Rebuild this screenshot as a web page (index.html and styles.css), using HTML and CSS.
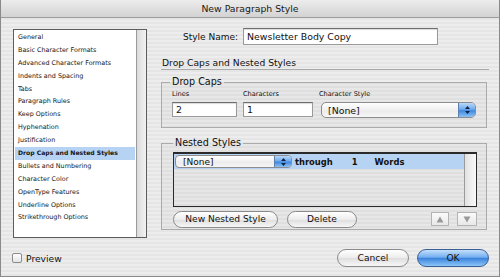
FILE: index.html
```html
<!DOCTYPE html>
<html lang="en">
<head>
    <meta charset="UTF-8">
    <title>New Paragraph Style</title>
    <link rel="stylesheet" href="styles.css">
</head>
<body>
    <div class="window">
        <!-- Title bar -->
        <div class="titlebar">New Paragraph Style</div>

        <div class="main">
            <!-- Category list -->
            <div class="cat-list">
                <ul class="cats">
                    <li>General</li>
                    <li>Basic Character Formats</li>
                    <li>Advanced Character Formats</li>
                    <li>Indents and Spacing</li>
                    <li>Tabs</li>
                    <li>Paragraph Rules</li>
                    <li>Keep Options</li>
                    <li>Hyphenation</li>
                    <li>Justification</li>
                    <li class="selected">Drop Caps and Nested Styles</li>
                    <li>Bullets and Numbering</li>
                    <li>Character Color</li>
                    <li>OpenType Features</li>
                    <li>Underline Options</li>
                    <li>Strikethrough Options</li>
                </ul>
                <div class="scroll-track"></div>
            </div>

            <!-- Settings panel -->
            <div class="settings">
                <div class="name-row">
                    <span class="name-label">Style Name:</span>
                    <div class="text-field name-field">Newsletter Body Copy</div>
                </div>

                <h2 class="section-head">Drop Caps and Nested Styles</h2>

                <fieldset class="group drop-caps">
                    <legend>Drop Caps</legend>
                    <div class="dc-fields">
                        <div class="field">
                            <span class="field-label">Lines</span>
                            <div class="text-field lines-field">2</div>
                        </div>
                        <div class="field">
                            <span class="field-label">Characters</span>
                            <div class="text-field chars-field">1</div>
                        </div>
                        <div class="field">
                            <span class="field-label">Character Style</span>
                            <div class="popup style-popup">
                                <span class="popup-text">[None]</span>
                                <span class="popup-arrows">
                                    <svg width="7" height="10" viewBox="0 0 7 10"><path d="M3.5 1 L6 4 L1 4 Z M3.5 9 L6 6 L1 6 Z" fill="#10254a"/></svg>
                                </span>
                            </div>
                        </div>
                    </div>
                </fieldset>

                <fieldset class="group nested">
                    <legend>Nested Styles</legend>
                    <div class="nested-list">
                        <div class="nested-rows">
                            <div class="nested-row">
                                <div class="popup row-popup">
                                    <span class="popup-text">[None]</span>
                                    <span class="popup-arrows">
                                        <svg width="7" height="10" viewBox="0 0 7 10"><path d="M3.5 1 L6 4 L1 4 Z M3.5 9 L6 6 L1 6 Z" fill="#10254a"/></svg>
                                    </span>
                                </div>
                                <span class="row-word">through</span>
                                <span class="row-num">1</span>
                                <span class="row-unit">Words</span>
                            </div>
                        </div>
                        <div class="scroll-track"></div>
                    </div>
                    <div class="nested-actions">
                        <button class="btn new-btn">New Nested Style</button>
                        <button class="btn delete-btn">Delete</button>
                        <span class="spacer"></span>
                        <button class="arrow-btn up">
                            <svg width="8" height="7" viewBox="0 0 8 7"><path d="M4 0.5 L7.5 6.5 L0.5 6.5 Z" fill="#9a9a9a"/></svg>
                        </button>
                        <button class="arrow-btn down">
                            <svg width="8" height="7" viewBox="0 0 8 7"><path d="M4 6.5 L7.5 0.5 L0.5 0.5 Z" fill="#9a9a9a"/></svg>
                        </button>
                    </div>
                </fieldset>
            </div>
        </div>

        <!-- Footer -->
        <div class="footer">
            <div class="preview"><span class="checkbox"></span>Preview</div>
            <span class="spacer"></span>
            <button class="btn cancel-btn">Cancel</button>
            <button class="btn ok-btn">OK</button>
        </div>
    </div>
</body>
</html>
```

FILE: styles.css
```css
/* Page */
body {
    margin: 0;
    padding: 0;
    background: #6b6b6b;
    font-family: "DejaVu Sans", sans-serif;
    color: #111;
}

.window {
    width: 500px;
    height: 277px;
    box-sizing: border-box;
    border: 1px solid #8a8a8a;
    border-top: none;
    background: repeating-linear-gradient(to bottom, #ededed 0, #ededed 2px, #e5e5e5 2px, #e5e5e5 4px);
    overflow: hidden;
}

/* Title bar */
.titlebar {
    height: 17px;
    line-height: 17px;
    text-align: center;
    font-size: 9.3px;
    color: #1a1a1a;
    background: linear-gradient(to bottom, #ececec, #d3d3d3);
    border-bottom: 1px solid #9c9c9c;
}

.main {
    display: grid;
    grid-template-columns: 134px 326px;
    column-gap: 14px;
    padding: 11px 0 0 12px;
}

/* Category list */
.cat-list {
    display: flex;
    height: 209px;
    box-sizing: border-box;
    border: 1px solid #5c5c5c;
    background: #fff;
}

.cats {
    flex: 1;
    list-style: none;
    margin: 0;
    padding: 1px 1px 0 1px;
}

.cats li {
    height: 12.9px;
    line-height: 12.9px;
    font-size: 6.4px;
    padding-left: 3px;
    color: #151515;
    white-space: nowrap;
}

.cats li.selected {
    background: #b7d3f4;
    font-weight: bold;
    font-size: 6.1px;
}

.scroll-track {
    width: 9px;
    background: linear-gradient(to right, #dcdcdc, #f2f2f2);
    border-left: 1px solid #9a9a9a;
}

/* Settings */
.settings {
    display: flex;
    flex-direction: column;
}

.name-row {
    display: flex;
    align-items: center;
    gap: 5px;
    margin-top: -1px;
    padding-left: 22px;
    height: 17px;
}

.name-label {
    font-size: 9px;
}

.text-field {
    box-sizing: border-box;
    background: #fff;
    border: 1px solid #9a9a9a;
    border-top-color: #6e6e6e;
    box-shadow: inset 0 1px 1px rgba(0, 0, 0, 0.15);
    font-size: 9.4px;
    padding-left: 3px;
    display: flex;
    align-items: center;
}

.name-field {
    width: 195px;
    height: 17px;
}

.section-head {
    margin: 12px 0 0 0;
    font-size: 9.2px;
    font-weight: normal;
    line-height: 12px;
    padding-left: 1px;
    border-bottom: 1px solid #a9a9a9;
    width: 327px;
}

/* Group boxes */
.group {
    margin: 0;
    border: 1px solid #ababab;
    background: rgba(0, 0, 0, 0.025);
    box-sizing: border-box;
    width: 326px;
    min-width: 0;
}

.group legend {
    font-size: 9.6px;
    line-height: 12px;
    padding: 0 2px;
}

.drop-caps {
    margin-top: 6px;
    padding: 0 10px 9px 8px;
}

.dc-fields {
    display: flex;
    gap: 6px;
    margin-top: 2px;
    padding-left: 2px;
}

.field {
    display: flex;
    flex-direction: column;
    gap: 3px;
}

.field-label {
    font-size: 6.6px;
    line-height: 9px;
}

.lines-field {
    width: 65px;
    height: 15px;
}

.chars-field {
    width: 70px;
    height: 15px;
}

/* Popup menus */
.popup {
    box-sizing: border-box;
    display: flex;
    align-items: stretch;
    border: 1px solid #8c8c8c;
    border-radius: 5px;
    background: linear-gradient(to bottom, #ffffff, #ececec 60%, #f6f6f6);
    overflow: hidden;
}

.popup-text {
    flex: 1;
    display: flex;
    align-items: center;
    font-size: 9.4px;
    font-weight: normal;
}

.popup-arrows {
    width: 16px;
    display: flex;
    align-items: center;
    justify-content: center;
    background: linear-gradient(to bottom, #b9d9f9, #6ea9ec 45%, #3f87dd 55%, #8cc2f5);
    border-left: 1px solid #5b7fb0;
}

.style-popup {
    width: 155px;
    height: 16px;
    margin-left: 2px;
}

.style-popup .popup-text {
    padding-left: 6px;
}

/* Nested styles */
.nested {
    margin-top: 9px;
    padding: 0 9px 1px 11px;
}

.nested-list {
    display: flex;
    height: 55px;
    box-sizing: border-box;
    margin-top: 3px;
    border: 1px solid #2a2a2a;
    border-top-width: 2px;
    background: repeating-linear-gradient(to bottom, #e6e6e6 0, #e6e6e6 2px, #dedede 2px, #dedede 4px);
}

.nested-rows {
    flex: 1;
}

.nested-row {
    display: flex;
    align-items: center;
    height: 15px;
    background: #b7d3f4;
    font-size: 8.4px;
    font-weight: bold;
}

.row-popup {
    width: 117px;
    height: 13px;
    margin-left: 1px;
    border-radius: 4px;
}

.row-popup .popup-text {
    padding-left: 7px;
    font-size: 9px;
}

.row-word {
    margin-left: 3px;
}

.row-num {
    margin-left: 19px;
}

.row-unit {
    margin-left: 17px;
}

.nested-list .scroll-track {
    width: 11px;
    background: linear-gradient(to right, #e2e2e2, #fafafa);
}

.nested-actions {
    display: flex;
    align-items: center;
    gap: 9px;
    margin-top: 3px;
    height: 18px;
}

.spacer {
    flex: 1;
}

/* Buttons */
.btn {
    box-sizing: border-box;
    height: 17px;
    padding: 0;
    border: 1px solid #8a8a8a;
    border-radius: 9px;
    background: linear-gradient(to bottom, #ffffff, #ececec 50%, #dedede 51%, #f7f7f7);
    font-family: "DejaVu Sans", sans-serif;
    font-size: 9.1px;
    color: #111;
}

.new-btn {
    width: 105px;
}

.delete-btn {
    width: 70px;
}

.arrow-btn {
    box-sizing: border-box;
    height: 14px;
    padding: 0;
    border: 1px solid #b4b4b4;
    background: linear-gradient(to bottom, #fbfbfb, #e8e8e8);
    display: flex;
    align-items: center;
    justify-content: center;
}

.arrow-btn.up {
    width: 18px;
    margin-right: -1px;
}

.arrow-btn.down {
    width: 20px;
}

/* Footer */
.footer {
    display: flex;
    align-items: center;
    margin-top: 11px;
    padding: 0 10px 0 11px;
    height: 18px;
}

.preview {
    display: flex;
    align-items: center;
    gap: 4px;
    font-size: 9.2px;
}

.checkbox {
    width: 10px;
    height: 10px;
    box-sizing: border-box;
    border: 1px solid #8c8c8c;
    border-radius: 2px;
    background: linear-gradient(to bottom, #ffffff, #e4e4e4);
}

.cancel-btn {
    width: 72px;
    height: 18px;
    margin-right: 8px;
}

.ok-btn {
    width: 72px;
    height: 18px;
    border-color: #3b5f95;
    background: linear-gradient(to bottom, #c4e0fb, #74aef0 45%, #3b83dc 52%, #8cc6f8);
}
```
